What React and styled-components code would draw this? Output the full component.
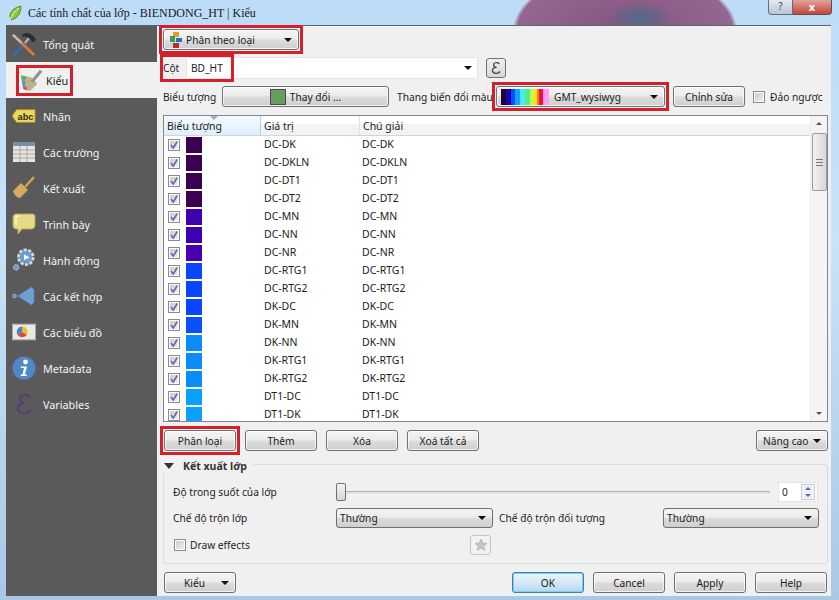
import React from "react";
import styled, { createGlobalStyle, css } from "styled-components";

const GlobalStyle = createGlobalStyle`
  html, body {
    margin: 0;
    padding: 0;
    background: #bcdcf8;
  }
  * {
    box-sizing: border-box;
  }
`;

const redMark = css`
  position: relative;
  &::after {
    content: "";
    position: absolute;
    top: -5px;
    bottom: -5px;
    left: -5px;
    right: -5px;
    border: 3px solid #d2202c;
  }
`;

const Screen = styled.div`
  width: 839px;
  height: 600px;
  overflow: hidden;
  display: flex;
  flex-direction: column;
  font-family: "Noto Sans", "Open Sans", sans-serif;
  font-size: 10.2px;
  color: #1c1c1c;
  background: linear-gradient(180deg, #bcdcf8 0%, #c8e2f8 40%, #a9c8e6 100%);
`;

const TitleBar = styled.div`
  height: 25px;
  flex: none;
  display: flex;
  align-items: flex-start;
  padding: 5px 7px 0 8px;
  background:
    radial-gradient(ellipse 34px 16px at 640px 18px, #4f6a8c 0%, transparent 100%),
    radial-gradient(ellipse 112px 60px at 625px 30px, #84557f 0%, #946690 96%, transparent 100%),
    #bcdcf8;
`;

const TitleText = styled.span`
  margin-left: 6px;
  font-family: "Liberation Serif", serif;
  font-size: 12px;
  line-height: 16px;
  color: #1a1a1a;
`;

const WindowButtons = styled.div`
  margin: -5px 0 0 auto;
  display: flex;
  height: 15px;
`;

const HelpButton = styled.div`
  width: 25px;
  border: 1px solid #5d6f80;
  border-top: none;
  border-radius: 0 0 0 4px;
  background: linear-gradient(180deg, #e2e9f0, #b9c6d2);
  text-align: center;
  font-size: 10px;
  line-height: 13px;
  color: #444;
`;

const CloseButton = styled.div`
  width: 39px;
  border: 1px solid #6b4a48;
  border-top: none;
  border-left: none;
  border-radius: 0 0 4px 0;
  background: linear-gradient(180deg, #e0a498, #c2463a);
  text-align: center;
  font-size: 11px;
  font-weight: 700;
  line-height: 13px;
  color: #fff;
`;

const Dialog = styled.div`
  height: 571px;
  margin: 0 8px 0 6px;
  display: flex;
  border-top: 1px solid #5a6570;
  background: #f0f0f0;
`;

const Sidebar = styled.div`
  width: 151px;
  flex: none;
  background: #5a5a5a;
`;

const NavItem = styled.div`
  height: 36px;
  display: flex;
  align-items: center;
  padding-left: 6px;
  gap: 7px;
  font-size: 10.8px;
  color: ${(p) => (p.$active ? "#1c1c1c" : "#f4f4f4")};
  background: ${(p) => (p.$active ? "#f0f0f0" : "transparent")};
`;

const MarkedNav = styled.span`
  display: flex;
  align-items: center;
  gap: 3px;
  margin-left: 7px;
  height: 25px;
  padding-right: 2px;
  outline: 3px solid #d2202c;
  outline-offset: 0;
`;

const IconSlot = styled.span`
  width: 24px;
  height: 24px;
  flex: none;
  display: flex;
  align-items: center;
  justify-content: center;
`;

const Main = styled.div`
  flex: 1;
  min-width: 0;
  display: flex;
  flex-direction: column;
  padding: 3px 3px 0 6px;
`;

const Row = styled.div`
  display: flex;
  align-items: center;
  position: relative;
  height: ${(p) => p.$h || 21}px;
  margin-top: ${(p) => p.$mt || 0}px;
`;

const Button = styled.div`
  width: ${(p) => p.$w || 72}px;
  height: 21px;
  flex: none;
  display: flex;
  align-items: center;
  justify-content: ${(p) => (p.$left ? "flex-start" : "center")};
  gap: 4px;
  padding: ${(p) => (p.$left ? "0 6px" : "0")};
  margin-left: ${(p) => p.$ml || 0}px;
  white-space: nowrap;
  border: 1px solid ${(p) => (p.$primary ? "#3c7fb1" : "#707070")};
  border-radius: 3px;
  background: ${(p) =>
    p.$primary
      ? "linear-gradient(180deg, #e8f4fb 0%, #d5e9f5 50%, #b5d8ee 100%)"
      : "linear-gradient(180deg, #f4f4f4 0%, #ebebeb 48%, #dcdcdc 52%, #cfcfcf 100%)"};
  box-shadow: inset 0 0 0 1px ${(p) => (p.$primary ? "#7fd0f0" : "rgba(255, 255, 255, 0.7)")};
  ${(p) => p.$marked && redMark}
`;

const ButtonText = styled.span`
  margin-left: ${(p) => p.$ml || 0}px;
`;

const Caret = styled.span`
  width: 0;
  height: 0;
  flex: none;
  margin-left: auto;
  border-left: 4px solid transparent;
  border-right: 4px solid transparent;
  border-top: 4px solid ${(p) => p.$color || "#111"};
`;

const Label = styled.span`
  flex: none;
  width: ${(p) => (p.$w ? `${p.$w}px` : "auto")};
  margin-left: ${(p) => p.$ml || 0}px;
  white-space: nowrap;
`;

const ColumnCombo = styled.div`
  width: 292px;
  height: 22px;
  display: flex;
  align-items: center;
  padding: 0 5px 0 4px;
  background: #fff;
  border: 1px solid #e4e4e4;
  border-radius: 2px;
`;

const ColumnMark = styled.div`
  position: absolute;
  left: -3px;
  top: -3px;
  width: 74px;
  height: 28px;
  border: 3px solid #d2202c;
`;

const ExprButton = styled.div`
  width: 20px;
  height: 20px;
  margin-left: 8px;
  display: flex;
  align-items: center;
  justify-content: center;
  border: 1px solid #707070;
  border-radius: 3px;
  background: linear-gradient(180deg, #f0f0f0, #d6d6d6);
`;

const Swatch = styled.span`
  width: 16px;
  height: 16px;
  flex: none;
  margin-left: ${(p) => p.$ml || 0}px;
  background: ${(p) => p.$color};
  border: 1px solid ${(p) => p.$border || "transparent"};
`;

const Ramp = styled.span`
  width: 48px;
  height: 16px;
  flex: none;
  margin: 0 1px 0 -2px;
  background: linear-gradient(
    90deg,
    #17003c 0 10%,
    #2400b0 10% 20%,
    #0050ff 20% 30%,
    #0aa8ff 30% 40%,
    #50e4ff 40% 50%,
    #50f080 50% 60%,
    #c8f840 60% 68%,
    #ffe020 68% 74%,
    #ff7820 74% 80%,
    #f01040 80% 88%,
    #ff9cf4 88% 100%
  );
`;

const Check = styled.span`
  width: 12px;
  height: 12px;
  flex: none;
  display: flex;
  align-items: center;
  justify-content: center;
  margin-left: ${(p) => p.$ml || 0}px;
  border: 1px solid #8a8a8a;
  background: linear-gradient(135deg, #c8c8c8, #f2f2f2);
  box-shadow: inset 0 0 0 1px #fff;
`;

const Table = styled.div`
  height: 307px;
  margin-top: 8px;
  position: relative;
  overflow: hidden;
  font-size: 10.5px;
  background: #fff;
  border: 1px solid #828790;
`;

const HeaderRow = styled.div`
  height: 20px;
  display: flex;
  margin-right: 17px;
  border-bottom: 1px solid #d5d5d5;
  background: linear-gradient(180deg, #fff 0%, #fff 40%, #f4f4f4 41%, #f1f2f3 100%);
`;

const HeaderCell = styled.div`
  width: ${(p) => p.$w}px;
  flex: none;
  position: relative;
  padding: 3px 0 0 3px;
  line-height: 14px;
  border-right: 1px solid ${(p) => (p.$sorted ? "#a9d4ee" : p.$last ? "transparent" : "#e2e2e2")};
  background: ${(p) => (p.$sorted ? "linear-gradient(180deg, #f4faff, #deeffa)" : "transparent")};
`;

const SortArrow = styled.span`
  position: absolute;
  left: 46px;
  top: 0;
  width: 0;
  height: 0;
  border-left: 4px solid transparent;
  border-right: 4px solid transparent;
  border-top: 4px solid #8fb4d0;
`;

const TableRow = styled.div`
  height: 18px;
  display: flex;
  align-items: center;
  padding-left: 4px;
`;

const ValueCell = styled.span`
  width: ${(p) => p.$w}px;
  flex: none;
  margin-top: -2px;
  margin-left: ${(p) => p.$ml || 0}px;
`;

const ScrollTrack = styled.div`
  position: absolute;
  right: 0;
  top: 0;
  bottom: 0;
  width: 17px;
  display: flex;
  flex-direction: column;
  align-items: center;
  background: #f4f4f4;
  border-left: 1px solid #ededed;
`;

const ScrollArrow = styled.span`
  width: 0;
  height: 0;
  flex: none;
  margin: ${(p) => (p.$down ? "auto 0 6px" : "6px 0 0")};
  border-left: 3.5px solid transparent;
  border-right: 3.5px solid transparent;
  ${(p) => (p.$down ? "border-top: 3px solid #555;" : "border-bottom: 3px solid #555;")}
`;

const ScrollThumb = styled.div`
  width: 15px;
  height: 58px;
  margin-top: 8px;
  display: flex;
  align-items: center;
  justify-content: center;
  border: 1px solid #9a9a9a;
  border-radius: 2px;
  background: linear-gradient(90deg, #f2f2f2, #d8d8d8);
`;

const Grip = styled.span`
  width: 7px;
  height: 7px;
  background: repeating-linear-gradient(180deg, #777 0 1px, transparent 1px 3px);
`;

const ButtonBar = styled.div`
  display: flex;
  align-items: center;
  height: 21px;
  margin-top: 8px;
  padding: 0 ${(p) => p.$pr || 0}px 0 1px;
`;

const Spacer = styled.div`
  flex: 1;
`;

const Group = styled.div`
  position: relative;
  height: 100px;
  margin-top: 13px;
  padding: 17px 9px 0 9px;
  border: 1px solid #dcdcdc;
  border-radius: 3px;
`;

const GroupTitle = styled.div`
  position: absolute;
  left: -1px;
  top: -6px;
  display: flex;
  align-items: center;
  gap: 9px;
  padding-right: 6px;
  background: #f0f0f0;
  font-weight: 700;
  font-size: 10.5px;
  line-height: 14px;
  color: #333;
`;

const Disclosure = styled.span`
  width: 0;
  height: 0;
  margin-left: 1px;
  border-left: 5px solid transparent;
  border-right: 5px solid transparent;
  border-top: 6px solid #333;
`;

const GroupRow = styled.div`
  display: grid;
  grid-template-columns: 163px 157px 170px 156px;
  align-items: center;
  height: 20px;
  margin-top: ${(p) => p.$mt || 0}px;
`;

const OpacityRow = styled.div`
  display: flex;
  align-items: center;
  height: 20px;
`;

const SliderTrack = styled.div`
  flex: none;
  width: 434px;
  height: 3px;
  position: relative;
  background: #e4e4e4;
  border-top: 1px solid #b0b0b0;
`;

const SliderThumb = styled.span`
  position: absolute;
  left: 0;
  top: -9px;
  width: 10px;
  height: 18px;
  border: 1px solid #707070;
  border-radius: 2px;
  background: linear-gradient(180deg, #f4f4f4, #d4d4d4);
`;

const SpinBox = styled.div`
  width: 40px;
  height: 20px;
  margin-left: 8px;
  display: flex;
  align-items: center;
  justify-content: space-between;
  padding: 0 2px 0 3px;
  background: #fff;
  border: 1px solid #e4e4e4;
`;

const SpinButtons = styled.div`
  width: 14px;
  height: 16px;
  display: flex;
  flex-direction: column;
  align-items: center;
  justify-content: space-around;
  border: 1px solid #c8d0dc;
  background: #eef2f8;
`;

const SpinArrow = styled.span`
  width: 0;
  height: 0;
  border-left: 3px solid transparent;
  border-right: 3px solid transparent;
  ${(p) => (p.$down ? "border-top: 3px solid #5a6a9a;" : "border-bottom: 3px solid #5a6a9a;")}
`;

const Select = styled.div`
  height: 20px;
  width: ${(p) => p.$w}px;
  display: flex;
  align-items: center;
  padding: 0 6px 0 3px;
  border: 1px solid #707070;
  border-radius: 3px;
  background: linear-gradient(180deg, #f4f4f4 0%, #ebebeb 48%, #dcdcdc 52%, #cfcfcf 100%);
`;

const EffectsRow = styled.div`
  display: flex;
  align-items: center;
  height: 20px;
  margin-top: 7px;
`;

const StarButton = styled.div`
  width: 21px;
  height: 20px;
  margin-left: ${(p) => p.$ml || 0}px;
  display: flex;
  align-items: center;
  justify-content: center;
  border: 1px solid #c4c4c4;
  border-radius: 3px;
  background: #f2f2f2;
`;

const rows = [
  ["DC-DK", "#3b0050"],
  ["DC-DKLN", "#3b0050"],
  ["DC-DT1", "#3b0050"],
  ["DC-DT2", "#3b0050"],
  ["DC-MN", "#3f00b4"],
  ["DC-NN", "#3f00b4"],
  ["DC-NR", "#4a00b0"],
  ["DC-RTG1", "#0a46ff"],
  ["DC-RTG2", "#0a46ff"],
  ["DK-DC", "#0a46ff"],
  ["DK-MN", "#0a50ff"],
  ["DK-NN", "#0a8cff"],
  ["DK-RTG1", "#0a8cff"],
  ["DK-RTG2", "#0a8cff"],
  ["DT1-DC", "#0aa0ff"],
  ["DT1-DK", "#0aa0ff"],
];

const TickMark = () => (
  <svg width="10" height="10" viewBox="0 0 10 10">
    <path d="M2 5 L4.3 8 L8.2 1.5" fill="none" stroke="#5a6fb8" strokeWidth="1.6" />
  </svg>
);

const LeafIcon = () => (
  <svg width="14" height="16" viewBox="0 0 14 16">
    <path d="M3 15 C0 9 4 3 13 1 C13 8 10 13 3 15 Z" fill="#8cc63f" stroke="#3f7a1a" strokeWidth="0.8" />
    <path d="M2 15 C4 10 7 6 11 3" fill="none" stroke="#f7f7d0" strokeWidth="1" />
  </svg>
);

const ToolsIcon = () => (
  <svg width="26" height="26" viewBox="0 0 26 26">
    <path d="M2 25 L15 11" stroke="#2f6fb0" strokeWidth="3.2" />
    <path d="M14 12 L19 6" stroke="#aeb6bd" strokeWidth="2.4" />
    <path d="M1 3 L24 25" stroke="#e8762a" strokeWidth="3" />
    <path d="M1 3 L10 11.5" stroke="#b8bec4" strokeWidth="2.4" />
    <path d="M11 3 C16 -1 23 2 26 9 L22 11 C19 6 16 5 11 5 Z" fill="#2b2b2b" />
  </svg>
);

const PaintIcon = () => (
  <svg width="26" height="26" viewBox="0 0 26 26">
    <path d="M2 8 L13 10 L20 17 L12 25 L5 23 Z" fill="#b9b48a" />
    <path d="M2 8 L8 9 L6 15 L3 14 Z" fill="#58b368" />
    <path d="M3 14 L7 15 L6 21 L4 20 Z" fill="#5a8fd0" />
    <path d="M4 20 L8 20 L9 24 L5 23 Z" fill="#d2506a" />
    <path d="M14 15 L24 3" stroke="#8d9490" strokeWidth="3.4" />
  </svg>
);

const LabelIcon = () => (
  <svg width="26" height="16" viewBox="0 0 26 16">
    <path d="M5 1 H25 V15 H5 L0 8 Z" fill="#eed95c" stroke="#a88a1c" />
    <text x="6" y="12" fontFamily="Liberation Sans, sans-serif" fontSize="10" fontWeight="700" fill="#2a2a2a">abc</text>
  </svg>
);

const TableIcon = () => (
  <svg width="24" height="22" viewBox="0 0 24 22">
    <rect x="1" y="1" width="22" height="20" fill="#e6e6e0" />
    <rect x="1" y="1" width="22" height="4" fill="#7a8ea8" />
    <path d="M1 9 H23 M1 13 H23 M1 17 H23 M8 5 V21 M15 5 V21" stroke="#a8a8a0" />
  </svg>
);

const BrushIcon = () => (
  <svg width="24" height="24" viewBox="0 0 24 24">
    <path d="M13 11 L22 1" stroke="#d8a040" strokeWidth="2.6" />
    <path d="M9 7 L16 14 L8 22 C5 22 2 19 1 15 Z" fill="#d9a860" />
  </svg>
);

const BubbleIcon = () => (
  <svg width="24" height="24" viewBox="0 0 24 24">
    <path d="M4 2 H20 C23 2 23 4 23 6 V13 C23 16 21 17 19 17 H10 L6 22 L6 17 H4 C2 17 1 15 1 13 V6 C1 3 2 2 4 2 Z" fill="#e6d98a" stroke="#b8a850" />
    <path d="M4 13 V6 C4 4 5 4 8 4" fill="none" stroke="#fbf6d0" strokeWidth="1.5" />
  </svg>
);

const GearIcon = () => (
  <svg width="26" height="26" viewBox="0 0 26 26">
    <circle cx="15" cy="10" r="8" fill="#5e8fc4" stroke="#d8d8d8" strokeWidth="3" strokeDasharray="3.5 1.5" />
    <circle cx="15" cy="10" r="5.5" fill="#6aa0d8" />
    <path d="M13 7 L19 10 L13 13 Z" fill="#fff" />
    <circle cx="4.5" cy="21" r="3" fill="#6f9acb" stroke="#c8d4e0" strokeDasharray="2 1" />
  </svg>
);

const JoinIcon = () => (
  <svg width="28" height="26" viewBox="0 0 28 26">
    <path d="M6 13 L23 2 L26 6 V20 L23 24 Z" fill="#6fa0d0" stroke="#2f5f90" strokeWidth="0.6" />
    <circle cx="3" cy="13" r="2.2" fill="#5e8fc4" stroke="#d0dcea" strokeWidth="0.6" />
  </svg>
);

const ChartIcon = () => (
  <svg width="26" height="18" viewBox="0 0 26 18">
    <rect x="0.5" y="0.5" width="25" height="17" fill="#e8e8e4" stroke="#aaa" />
    <path d="M11 9 V3 A6 6 0 0 1 16 12 Z" fill="#e8c030" />
    <path d="M11 9 L16 12 A6 6 0 0 1 6 12 Z" fill="#d8483a" />
    <path d="M11 9 L6 12 A6 6 0 0 1 11 3 Z" fill="#4a80c0" />
  </svg>
);

const InfoIcon = () => (
  <svg width="24" height="24" viewBox="0 0 24 24">
    <circle cx="12" cy="12" r="11.5" fill="#4f88c8" />
    <circle cx="13.5" cy="6" r="2.4" fill="#fff" />
    <path d="M9 10.5 H15 L12.8 18.5 H15 L14.5 20 H8.5 L9 18.5 H10.5 L12 12 H8.7 Z" fill="#fff" />
  </svg>
);

const EpsilonIcon = ({ size = 24, color = "#5a3d72" }) => (
  <svg width={size} height={size} viewBox="0 0 24 24">
    <path d="M18 5 C14 1 7 3 8 7 C8.5 10 11 11 13 11 C9 11 5 13 6 17 C7 22 15 23 19 18" fill="none" stroke={color} strokeWidth="2.2" />
  </svg>
);

const CategoryIcon = () => (
  <svg width="12" height="16" viewBox="0 0 12 16">
    <rect x="3" y="0" width="6" height="5" fill="#e0a030" />
    <rect x="0" y="4" width="5" height="6" fill="#3f9a58" />
    <rect x="6" y="6" width="6" height="4" fill="#2c6fb0" />
    <rect x="3" y="11" width="6" height="5" fill="#b03030" />
  </svg>
);

const StarIcon = () => (
  <svg width="14" height="14" viewBox="0 0 14 14">
    <path d="M7 1 L8.8 5 L13 5.4 L9.8 8.2 L10.8 12.6 L7 10.2 L3.2 12.6 L4.2 8.2 L1 5.4 L5.2 5 Z" fill="#c4c4c4" stroke="#a8a8a8" strokeWidth="0.6" />
  </svg>
);

const navItems = [
  ["Tổng quát", <ToolsIcon />],
  ["Kiểu", <PaintIcon />],
  ["Nhãn", <LabelIcon />],
  ["Các trường", <TableIcon />],
  ["Kết xuất", <BrushIcon />],
  ["Trình bày", <BubbleIcon />],
  ["Hành động", <GearIcon />],
  ["Các kết hợp", <JoinIcon />],
  ["Các biểu đồ", <ChartIcon />],
  ["Metadata", <InfoIcon />],
  ["Variables", <EpsilonIcon />],
];

export default function App() {
  return (
    <Screen>
      <GlobalStyle />
      <TitleBar>
        <LeafIcon />
        <TitleText>Các tính chất của lớp - BIENDONG_HT | Kiểu</TitleText>
        <WindowButtons>
          <HelpButton>?</HelpButton>
          <CloseButton>x</CloseButton>
        </WindowButtons>
      </TitleBar>
      <Dialog>
        <Sidebar>
          {navItems.map(([name, icon]) =>
            name === "Kiểu" ? (
              <NavItem key={name} $active>
                <MarkedNav>
                  <IconSlot>{icon}</IconSlot>
                  {name}
                </MarkedNav>
              </NavItem>
            ) : (
              <NavItem key={name}>
                <IconSlot>{icon}</IconSlot>
                {name}
              </NavItem>
            )
          )}
        </Sidebar>
        <Main>
          <Row>
            <Button $w={136} $left $marked>
              <CategoryIcon />
              Phân theo loại
              <Caret />
            </Button>
          </Row>
          <Row $h={22} $mt={7}>
            <Label $w={23}>Cột</Label>
            <ColumnCombo>
              BD_HT
              <Caret />
            </ColumnCombo>
            <ExprButton>
              <EpsilonIcon size={14} color="#444" />
            </ExprButton>
            <ColumnMark />
          </Row>
          <Row $mt={7}>
            <Label $w={52}>Biểu tượng</Label>
            <Button $w={167} $ml={7}>
              <Swatch $color="#659f5c" $border="#4a4a4a" />
              Thay đổi ...
            </Button>
            <Label $w={93} $ml={8}>Thang biến đổi màu</Label>
            <Button $w={169} $ml={6} $left $marked>
              <Ramp />
              GMT_wysiwyg
              <Caret />
            </Button>
            <Button $w={72} $ml={8}>Chỉnh sửa</Button>
            <Check $ml={8} />
            <Label $ml={5}>Đảo ngược</Label>
          </Row>
          <Table>
            <HeaderRow>
              <HeaderCell $w={97} $sorted>
                <SortArrow />
                Biểu tượng
              </HeaderCell>
              <HeaderCell $w={99}>Giá trị</HeaderCell>
              <HeaderCell $w={449} $last>Chú giải</HeaderCell>
            </HeaderRow>
            {rows.map(([value, color]) => (
              <TableRow key={value}>
                <Check>
                  <TickMark />
                </Check>
                <Swatch $color={color} $ml={6} />
                <ValueCell $w={98} $ml={62}>{value}</ValueCell>
                <ValueCell $w={200}>{value}</ValueCell>
              </TableRow>
            ))}
            <ScrollTrack>
              <ScrollArrow />
              <ScrollThumb>
                <Grip />
              </ScrollThumb>
              <ScrollArrow $down />
            </ScrollTrack>
          </Table>
          <ButtonBar>
            <Button $marked>Phân loại</Button>
            <Button $ml={9}>Thêm</Button>
            <Button $ml={9}>Xóa</Button>
            <Button $ml={9}>Xoá tất cả</Button>
            <Spacer />
            <Button $left>
              Nâng cao
              <Caret />
            </Button>
          </ButtonBar>
          <Group>
            <GroupTitle>
              <Disclosure />
              Kết xuất lớp
            </GroupTitle>
            <OpacityRow>
              <Label $w={163}>Độ trong suốt của lớp</Label>
              <SliderTrack>
                <SliderThumb />
              </SliderTrack>
              <SpinBox>
                0
                <SpinButtons>
                  <SpinArrow />
                  <SpinArrow $down />
                </SpinButtons>
              </SpinBox>
            </OpacityRow>
            <GroupRow $mt={6}>
              <Label>Chế độ trộn lớp</Label>
              <Select $w={157}>
                Thường
                <Caret />
              </Select>
              <Label $ml={6}>Chế độ trộn đối tượng</Label>
              <Select $w={156}>
                Thường
                <Caret />
              </Select>
            </GroupRow>
            <EffectsRow>
              <Check $ml={1} />
              <Label $w={60} $ml={4}>Draw effects</Label>
              <StarButton $ml={220}>
                <StarIcon />
              </StarButton>
            </EffectsRow>
          </Group>
          <ButtonBar $pr={1}>
            <Button $left>
              <ButtonText $ml={13}>Kiểu</ButtonText>
              <Caret />
            </Button>
            <Spacer />
            <Button $primary>OK</Button>
            <Button $ml={9}>Cancel</Button>
            <Button $ml={9}>Apply</Button>
            <Button $ml={9}>Help</Button>
          </ButtonBar>
        </Main>
      </Dialog>
    </Screen>
  );
}
